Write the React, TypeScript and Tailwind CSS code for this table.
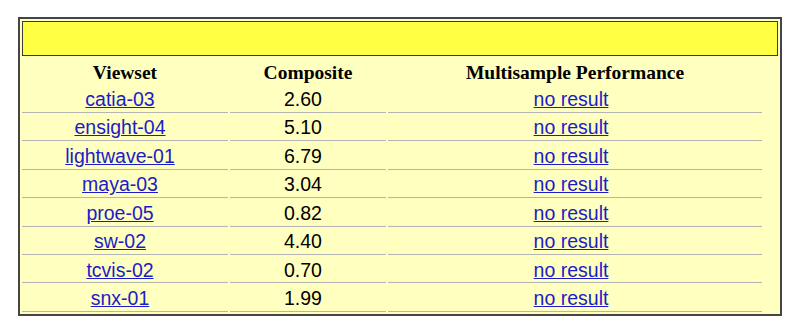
const rows = [
  { name: "catia-03", score: "2.60" },
  { name: "ensight-04", score: "5.10" },
  { name: "lightwave-01", score: "6.79" },
  { name: "maya-03", score: "3.04" },
  { name: "proe-05", score: "0.82" },
  { name: "sw-02", score: "4.40" },
  { name: "tcvis-02", score: "0.70" },
  { name: "snx-01", score: "1.99" },
];

const App = () => {
  return (
    <div className="bg-white w-[800px] h-[329px] pt-[17px] pl-[18px]">
      <table className="table-fixed w-[764px] border-separate border-spacing-[2px] border-2 border-[#454545] bg-[#ffffc0]">
        <colgroup>
          <col className="w-[206px]" />
          <col className="w-[156px]" />
          <col className="w-[374px]" />
          <col className="w-[14px]" />
        </colgroup>
        <tbody>
          <tr>
            <td colSpan={4} className="p-0 border border-[#3a3a3a] bg-[#ffff44]">
              <div className="h-[33px]" />
            </td>
          </tr>
          <tr className="font-['Liberation_Serif',serif] font-bold text-[19.5px] text-black">
            <th className="p-0 font-bold">
              <div className="h-[26.43px] pt-[3px] flex items-center justify-center">Viewset</div>
            </th>
            <th className="p-0 font-bold">
              <div className="h-[26.43px] pt-[3px] flex items-center justify-center">Composite</div>
            </th>
            <th className="p-0 font-bold">
              <div className="h-[26.43px] pt-[3px] flex items-center justify-center">
                Multisample Performance
              </div>
            </th>
            <th className="p-0" />
          </tr>
          {rows.map((r) => (
            <tr key={r.name} className="font-['Liberation_Sans',Arial,sans-serif] text-[19.5px]">
              <td className="p-0 border-b border-[#b4b4b4]">
                <div className="h-[25.43px] pt-[1px] pr-[10px] flex items-center justify-center">
                  <a href="#" className="text-[#1c1cc8] underline">
                    {r.name}
                  </a>
                </div>
              </td>
              <td className="p-0 border-b border-[#b4b4b4]">
                <div className="h-[25.43px] pt-[1px] pr-[10px] flex items-center justify-center text-black">
                  {r.score}
                </div>
              </td>
              <td className="p-0 border-b border-[#b4b4b4]">
                <div className="h-[25.43px] pt-[1px] pr-[8px] flex items-center justify-center">
                  <a href="#" className="text-[#1c1cc8] underline">
                    no result
                  </a>
                </div>
              </td>
              <td className="p-0" />
            </tr>
          ))}
        </tbody>
      </table>
    </div>
  );
};

export default App;
